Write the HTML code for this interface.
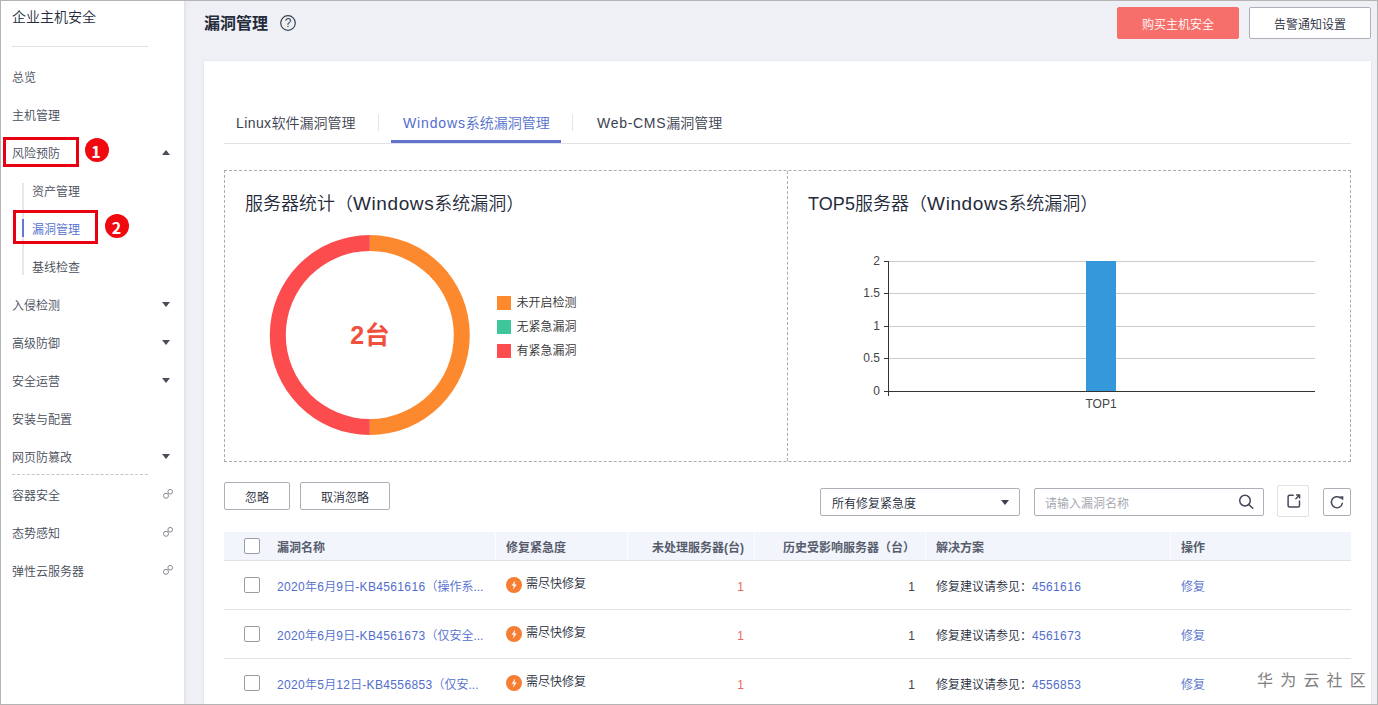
<!DOCTYPE html>
<html lang="zh-CN">
<head>
<meta charset="utf-8">
<title>漏洞管理</title>
<style>
*{box-sizing:border-box;margin:0;padding:0}
html,body{width:1378px;height:705px;overflow:hidden;background:#eef0f5}
body{font-family:"Liberation Sans","Noto Sans CJK SC",sans-serif;font-size:12px;font-weight:350;color:#252b3a;position:relative}
.abs{position:absolute}
.t{position:absolute;white-space:nowrap;line-height:20px;height:20px}
#frame{position:absolute;left:0;top:0;width:1378px;height:705px;border:1px solid #b4b4b4;z-index:50;pointer-events:none}
#side{position:absolute;left:0;top:0;width:184px;height:705px;background:#fff;box-shadow:1px 0 3px rgba(40,50,80,.10)}
#side .t{left:12px;color:#474c59;margin-top:2px}
#side .sub{left:32px}
.arr{position:absolute;left:162px;width:0;height:0;border-left:4px solid transparent;border-right:4px solid transparent}
.arr.dn{border-top:5px solid #4a4e5a}
.arr.up{border-bottom:5px solid #4a4e5a}
.lnk{position:absolute;left:163px;width:10px;height:10px}
.rbox{position:absolute;border:3px solid #e60012}
.rdot{position:absolute;width:24px;height:24px;border-radius:50%;background:#f0090f;color:#fff;font-weight:bold;font-size:16px;line-height:27px;text-align:center;font-family:"Noto Sans CJK SC","Liberation Sans",sans-serif}
#card{position:absolute;left:204px;top:61px;width:1167px;height:660px;background:#fff;box-shadow:0 0 2px rgba(30,40,70,.10)}
.btn{position:absolute;border:1px solid #adb0b8;border-radius:2px;background:#fff;text-align:center;color:#252b3a;white-space:nowrap}
.dash{position:absolute;border:1px dashed #a9abb2}
.hd{position:absolute;top:532px;height:29px;background:#f2f5fc;border-bottom:1px solid #dfe1e6}
.th{position:absolute;top:538px;line-height:20px;font-weight:bold;color:#575d6c;white-space:nowrap}
.cb{position:absolute;left:244px;width:16px;height:16px;border:1px solid #9a9da6;border-radius:2px;background:#fff}
.row{position:absolute;left:224px;width:1127px;height:1px;background:#dfe1e6}
.lk{color:#526ecc}
.n{letter-spacing:.35px}
.td{position:absolute;white-space:nowrap;line-height:20px}
.bolt{position:absolute;left:506px;width:16px;height:16px}
</style>
</head>
<body>
<div id="side">
  <div class="t" style="top:7px;margin-top:0;font-size:14px;color:#252b3a">企业主机安全</div>
  <div class="abs" style="left:12px;top:46px;width:136px;height:1px;background:#dfe1e6"></div>
  <div class="t" style="top:66px">总览</div>
  <div class="t" style="top:104px">主机管理</div>
  <div class="t" style="top:142px">风险预防</div>
  <div class="arr up" style="top:150px"></div>
  <div class="abs" style="left:22px;top:183px;width:2px;height:92px;background:#e5e7ec"></div>
  <div class="t sub" style="top:180px">资产管理</div>
  <div class="abs" style="left:22px;top:219px;width:2px;height:18px;background:#6479d3"></div>
  <div class="t sub" style="top:218px;color:#526ecc">漏洞管理</div>
  <div class="t sub" style="top:256px">基线检查</div>
  <div class="t" style="top:294px">入侵检测</div><div class="arr dn" style="top:302px"></div>
  <div class="t" style="top:332px">高级防御</div><div class="arr dn" style="top:340px"></div>
  <div class="t" style="top:370px">安全运营</div><div class="arr dn" style="top:378px"></div>
  <div class="t" style="top:408px">安装与配置</div>
  <div class="t" style="top:446px">网页防篡改</div><div class="arr dn" style="top:454px"></div>
  <div class="abs" style="left:12px;top:474px;width:136px;height:0;border-top:1px dashed #c3c6cd"></div>
  <div class="t" style="top:484px">容器安全</div>
  <div class="t" style="top:522px">态势感知</div>
  <div class="t" style="top:560px">弹性云服务器</div>
  <svg class="lnk" style="top:489px" viewBox="0 0 10 10"><g fill="none" stroke="#858892" stroke-width="1"><circle cx="3" cy="6.8" r="2.5"/><circle cx="7.2" cy="2.7" r="2.3"/></g></svg>
  <svg class="lnk" style="top:527px" viewBox="0 0 10 10"><g fill="none" stroke="#858892" stroke-width="1"><circle cx="3" cy="6.8" r="2.5"/><circle cx="7.2" cy="2.7" r="2.3"/></g></svg>
  <svg class="lnk" style="top:565px" viewBox="0 0 10 10"><g fill="none" stroke="#858892" stroke-width="1"><circle cx="3" cy="6.8" r="2.5"/><circle cx="7.2" cy="2.7" r="2.3"/></g></svg>
  <div class="rbox" style="left:3px;top:137px;width:76px;height:30px"></div>
  <div class="rdot" style="left:85px;top:138px;padding-right:2px">1</div>
  <div class="rbox" style="left:13px;top:210px;width:85px;height:34px"></div>
  <div class="rdot" style="left:105px;top:214px;padding-right:1px">2</div>
</div>

<!-- page header -->
<div class="t" style="left:204px;top:13px;font-size:16px;font-weight:bold;line-height:22px;height:22px;color:#252b3a">漏洞管理</div>
<svg class="abs" style="left:280px;top:15px" width="16" height="16" viewBox="0 0 16 16"><circle cx="8" cy="8" r="7.3" fill="none" stroke="#3c4150" stroke-width="1.2"/><text x="8" y="12.3" font-size="12" text-anchor="middle" fill="#3c4150" font-family="Liberation Sans, sans-serif">?</text></svg>
<div class="btn" style="left:1117px;top:7px;width:122px;height:32px;line-height:35px;background:#f66f6a;border-color:#f66f6a;color:#fff">购买主机安全</div>
<div class="btn" style="left:1249px;top:7px;width:122px;height:32px;line-height:35px">告警通知设置</div>

<div id="card"></div>
<!-- CARD-START -->
<!-- tabs -->
<div class="t" style="left:236px;top:112px;font-size:14px;line-height:22px;height:22px;color:#3c4150"><span style="letter-spacing:.4px">Linux</span>软件漏洞管理</div>
<div class="abs" style="left:378px;top:114px;width:1px;height:17px;background:#e3e5ea"></div>
<div class="t" style="left:403px;top:112px;font-size:14px;line-height:22px;height:22px;color:#526ecc"><span style="letter-spacing:.86px">Windows</span>系统漏洞管理</div>
<div class="abs" style="left:572px;top:114px;width:1px;height:17px;background:#e3e5ea"></div>
<div class="t" style="left:597px;top:112px;font-size:14px;line-height:22px;height:22px;color:#3c4150"><span style="letter-spacing:.7px">Web-CMS</span>漏洞管理</div>
<div class="abs" style="left:224px;top:143px;width:1127px;height:1px;background:#dfe1e6"></div>
<div class="abs" style="left:391px;top:140px;width:170px;height:3px;background:#6371cf"></div>

<!-- panels -->
<div class="dash" style="left:224px;top:170px;width:1127px;height:292px"></div>
<div class="abs" style="left:787px;top:171px;width:0;height:290px;border-left:1px dashed #a9abb2"></div>
<div class="t" style="left:245px;top:191px;font-size:18px;line-height:26px;height:26px;color:#252b3a">服务器统计（<span style="font-size:19px;letter-spacing:.6px">Windows</span>系统漏洞）</div>
<div class="t" style="left:808px;top:191px;font-size:18px;line-height:26px;height:26px;color:#252b3a"><span style="letter-spacing:.1px">TOP5</span>服务器（<span style="font-size:19px;letter-spacing:.6px">Windows</span>系统漏洞）</div>

<!-- donut -->
<svg class="abs" style="left:264px;top:230px" width="210" height="210" viewBox="0 0 210 210">
  <path d="M105.8 5 A100 100 0 0 1 105.8 205 L105.8 189 A84 84 0 0 0 105.8 21 Z" fill="#fd892f"/>
  <path d="M105.8 5 A100 100 0 0 0 105.8 205 L105.8 189 A84 84 0 0 1 105.8 21 Z" fill="#fc4c4d"/>
  <text x="106.3" y="113.5" text-anchor="middle" font-size="25" letter-spacing="0.6" font-weight="bold" fill="#f0503c" font-family="Liberation Sans, Noto Sans CJK SC, sans-serif">2台</text>
</svg>
<div class="abs" style="left:497px;top:296px;width:14px;height:14px;background:#fd892f"></div>
<div class="abs" style="left:497px;top:320px;width:14px;height:14px;background:#3ec59b"></div>
<div class="abs" style="left:497px;top:344px;width:14px;height:14px;background:#fc4c4d"></div>
<div class="t" style="left:516.5px;top:293px;color:#333">未开启检测</div>
<div class="t" style="left:516.5px;top:317px;color:#333">无紧急漏洞</div>
<div class="t" style="left:516.5px;top:341px;color:#333">有紧急漏洞</div>

<!-- bar chart -->
<svg class="abs" style="left:840px;top:245px" width="500" height="180" viewBox="840 245 500 180" font-family="Liberation Sans, sans-serif" font-size="12" fill="#444">
  <g stroke="#ccc" stroke-width="1" shape-rendering="crispEdges">
    <line x1="889" y1="261.5" x2="1315" y2="261.5"/>
    <line x1="889" y1="293.5" x2="1315" y2="293.5"/>
    <line x1="889" y1="326.5" x2="1315" y2="326.5"/>
    <line x1="889" y1="358.5" x2="1315" y2="358.5"/>
  </g>
  <rect x="1086" y="261" width="30" height="130" fill="#3498db"/>
  <g stroke="#333" stroke-width="1" shape-rendering="crispEdges">
    <line x1="888.5" y1="261" x2="888.5" y2="396"/>
    <line x1="884" y1="391.5" x2="1315" y2="391.5"/>
    <line x1="884" y1="261.5" x2="889" y2="261.5"/>
    <line x1="884" y1="293.5" x2="889" y2="293.5"/>
    <line x1="884" y1="326.5" x2="889" y2="326.5"/>
    <line x1="884" y1="358.5" x2="889" y2="358.5"/>
  </g>
  <text x="880" y="265" text-anchor="end">2</text>
  <text x="880" y="297" text-anchor="end">1.5</text>
  <text x="880" y="330" text-anchor="end">1</text>
  <text x="880" y="362" text-anchor="end">0.5</text>
  <text x="880" y="395" text-anchor="end">0</text>
  <text x="1101" y="408" text-anchor="middle">TOP1</text>
</svg>

<!-- toolbar -->
<div class="btn" style="left:224px;top:482px;width:66px;height:28px;line-height:30px">忽略</div>
<div class="btn" style="left:300px;top:482px;width:90px;height:28px;line-height:30px">取消忽略</div>
<div class="btn" style="left:820px;top:488px;width:200px;height:28px;line-height:30px;text-align:left;padding-left:11px">所有修复紧急度</div>
<div class="arr dn" style="left:1001px;top:500px;border-top-color:#3c4150"></div>
<div class="btn" style="left:1034px;top:488px;width:230px;height:28px;line-height:30px;text-align:left;padding-left:10px;color:#a0a3ab">请输入漏洞名称</div>

<div class="btn" style="left:1277px;top:485px;width:32px;height:32px;border-color:#dfe1e6"></div>

<div class="btn" style="left:1323px;top:488px;width:28px;height:28px"></div>
<svg class="abs" style="left:1230px;top:480px" width="130" height="40" viewBox="1230 480 130 40"><g fill="none" stroke="#454a57" stroke-width="1.5" stroke-linecap="round" stroke-linejoin="round">
<circle cx="1245" cy="500.6" r="5.3"/><path d="M1248.9 504.6L1252.8 508.3"/>
<path d="M1293.2 495.2H1289.6Q1288.1 495.2 1288.1 496.7V505.5Q1288.1 507 1289.6 507H1298Q1299.5 507 1299.5 505.5V500.9"/>
<path d="M1295.9 498.8L1299.4 495.3M1296.6 495.1H1299.6V498.1"/>
<path d="M1342.3 503.3A5.5 5.5 0 1 1 1340.4 498"/></g>
<path d="M1339.9 496.8L1343.1 496.6L1342.9 500.1Z" fill="#454a57" stroke="#454a57" stroke-width=".6" stroke-linejoin="round"/></svg>

<!-- table -->
<div class="hd" style="left:224px;width:1127px"></div>
<div class="abs" style="left:495px;top:532px;width:1px;height:28px;background:#fbfcfe"></div><div class="abs" style="left:627px;top:532px;width:1px;height:28px;background:#fbfcfe"></div><div class="abs" style="left:754px;top:532px;width:1px;height:28px;background:#fbfcfe"></div><div class="abs" style="left:925px;top:532px;width:1px;height:28px;background:#fbfcfe"></div><div class="abs" style="left:1170px;top:532px;width:1px;height:28px;background:#fbfcfe"></div>
<div class="cb" style="top:538px"></div>
<div class="th" style="left:277px">漏洞名称</div>
<div class="th" style="left:506px">修复紧急度</div>
<div class="th" style="right:634px">未处理服务器(台)</div>
<div class="th" style="right:463px">历史受影响服务器（台）</div>
<div class="th" style="left:936px">解决方案</div>
<div class="th" style="left:1181px">操作</div>
<div class="cb" style="top:577px"></div>
<div class="td lk" style="left:277px;top:577px"><span class="n">2020</span>年<span class="n">6</span>月<span class="n">9</span>日<span class="n">-KB4561616</span>（操作系...</div>
<svg class="bolt" style="top:577px" viewBox="0 0 16 16"><circle cx="8" cy="8" r="8" fill="#f67e33"/><path d="M9.2 3.6L5.5 8.7H7.8L7 12.7L10.8 7.4H8.5Z" fill="#fff" fill-opacity=".92"/></svg>
<div class="td" style="left:526px;top:574px">需尽快修复</div>
<div class="td" style="right:634px;top:577px;color:#e56a5f">1</div>
<div class="td" style="right:463px;top:577px;color:#444">1</div>
<div class="td" style="left:936px;top:577px">修复建议请参见：<span class="lk n">4561616</span></div>
<div class="td lk" style="left:1181px;top:577px">修复</div>
<div class="row" style="top:609px"></div>
<div class="cb" style="top:626px"></div>
<div class="td lk" style="left:277px;top:626px"><span class="n">2020</span>年<span class="n">6</span>月<span class="n">9</span>日<span class="n">-KB4561673</span>（仅安全...</div>
<svg class="bolt" style="top:626px" viewBox="0 0 16 16"><circle cx="8" cy="8" r="8" fill="#f67e33"/><path d="M9.2 3.6L5.5 8.7H7.8L7 12.7L10.8 7.4H8.5Z" fill="#fff" fill-opacity=".92"/></svg>
<div class="td" style="left:526px;top:623px">需尽快修复</div>
<div class="td" style="right:634px;top:626px;color:#e56a5f">1</div>
<div class="td" style="right:463px;top:626px;color:#444">1</div>
<div class="td" style="left:936px;top:626px">修复建议请参见：<span class="lk n">4561673</span></div>
<div class="td lk" style="left:1181px;top:626px">修复</div>
<div class="row" style="top:658px"></div>
<div class="cb" style="top:675px"></div>
<div class="td lk" style="left:277px;top:675px"><span class="n">2020</span>年<span class="n">5</span>月<span class="n">12</span>日<span class="n">-KB4556853</span>（仅安...</div>
<svg class="bolt" style="top:675px" viewBox="0 0 16 16"><circle cx="8" cy="8" r="8" fill="#f67e33"/><path d="M9.2 3.6L5.5 8.7H7.8L7 12.7L10.8 7.4H8.5Z" fill="#fff" fill-opacity=".92"/></svg>
<div class="td" style="left:526px;top:672px">需尽快修复</div>
<div class="td" style="right:634px;top:675px;color:#e56a5f">1</div>
<div class="td" style="right:463px;top:675px;color:#444">1</div>
<div class="td" style="left:936px;top:675px">修复建议请参见：<span class="lk n">4556853</span></div>
<div class="td lk" style="left:1181px;top:675px">修复</div>
<div class="t" style="left:1257px;top:670px;font-size:16px;font-weight:400;line-height:22px;height:22px;color:#808080;letter-spacing:7.2px">华为云社区</div>
<!-- CARD-END -->
<div id="frame"></div>
</body>
</html>
